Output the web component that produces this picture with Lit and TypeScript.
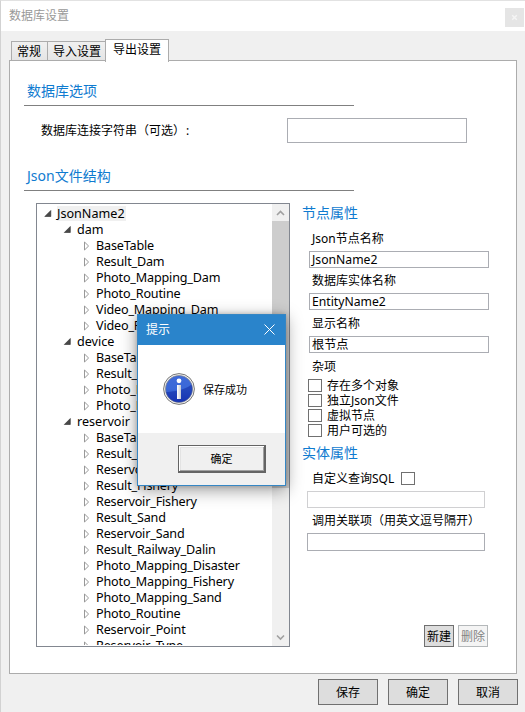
import { LitElement, html, css } from "lit";
import { customElement, property } from "lit/decorators.js";

interface TreeRow {
  text: string;
  level: number;
}

const kids = (names: string[]): TreeRow[] => names.map((text) => ({ text, level: 2 }));

const ROWS: TreeRow[] = [
  { text: "JsonName2", level: 0 },
  { text: "dam", level: 1 },
  ...kids(["BaseTable", "Result_Dam", "Photo_Mapping_Dam", "Photo_Routine", "Video_Mapping_Dam", "Video_Routine"]),
  { text: "device", level: 1 },
  ...kids(["BaseTable", "Result_Device", "Photo_Mapping_Device", "Photo_Routine"]),
  { text: "reservoir", level: 1 },
  ...kids([
    "BaseTable",
    "Result_Reservoir",
    "Reservoir_Dam",
    "Result_Fishery",
    "Reservoir_Fishery",
    "Result_Sand",
    "Reservoir_Sand",
    "Result_Railway_Dalin",
    "Photo_Mapping_Disaster",
    "Photo_Mapping_Fishery",
    "Photo_Mapping_Sand",
    "Photo_Routine",
    "Reservoir_Point",
    "Reservoir_Type",
  ]),
];

@customElement("config-tree")
export class ConfigTree extends LitElement {
  static styles = css`
    :host {
      display: flex;
      box-sizing: border-box;
      width: 254px;
      height: 444px;
      border: 1px solid #828790;
      background: #fff;
      overflow: hidden;
    }
    .rows {
      flex: 1;
      min-width: 0;
      height: 441px;
      padding-top: 2px;
      box-sizing: border-box;
      overflow: hidden;
    }
    .row {
      display: flex;
      height: 16px;
      line-height: 16px;
      font-size: 12.6px;
      white-space: pre;
    }
    .l0 { padding-left: 7px; }
    .l1 { padding-left: 26px; }
    .l2 { padding-left: 47px; letter-spacing: -0.17px; }
    .mark { flex: none; width: 13px; height: 16px; }
    .l2 .mark { width: 12px; }
    .l1 .mark { width: 14px; }
    .l0 .text { background: #f0f0f0; height: 15px; line-height: 15px; padding-right: 1px; }
    .bar {
      flex: none;
      width: 17px;
      display: flex;
      flex-direction: column;
      background: #f0f0f0;
    }
    .arrow { width: 17px; height: 17px; }
    .thumb { height: 267px; background: #cdcdcd; }
    .gap { flex: 1; }
  `;

  private mark(level: number) {
    return level < 2
      ? html`<svg class="mark" viewBox="0 0 13 16"><path d="M6.800 4.500V10.500H.8z" fill="#484848" stroke="#2e2e2e" stroke-width=".6" /></svg>`
      : html`<svg class="mark" viewBox="0 0 12 16"><path d="M.5 4v8L4.600 8z" fill="#fff" stroke="#989898" /></svg>`;
  }

  render() {
    return html`
      <div class="rows">
        ${ROWS.map((r) => html`<div class="row l${r.level}">${this.mark(r.level)}<span class="text">${r.text}</span></div>`)}
      </div>
      <div class="bar">
        <svg class="arrow" viewBox="0 0 17 17"><path d="M5 11l3.500-3.500L12 11" fill="none" stroke="#a0a0a0" stroke-width="1.600" /></svg>
        <div class="thumb"></div>
        <div class="gap"></div>
        <svg class="arrow" viewBox="0 0 17 17"><path d="M5 6.500 8.500 10 12 6.500" fill="none" stroke="#a0a0a0" stroke-width="1.600" /></svg>
      </div>
    `;
  }
}

@customElement("message-box")
export class MessageBox extends LitElement {
  @property() heading = "";
  @property() message = "";

  static styles = css`
    :host {
      display: flex;
      flex-direction: column;
      box-sizing: border-box;
      width: 149px;
      height: 172px;
      border: 1px solid #3586c4;
      background: #fff;
      box-shadow: 0 4px 16px rgba(0, 0, 0, 0.4), 0 0 5px rgba(0, 0, 0, 0.2);
      font-size: 11px;
    }
    .title {
      display: flex;
      justify-content: space-between;
      height: 30px;
      line-height: 30px;
      padding: 0 10px 0 8px;
      background: #2a84cb;
      color: #fff;
      font-size: 12px;
    }
    .close { width: 11px; height: 11px; margin-top: 9px; }
    .body {
      display: flex;
      align-items: center;
      flex: 1;
      padding-left: 25px;
      gap: 8px;
    }
    .icon { width: 32px; height: 32px; }
    .footer {
      display: flex;
      height: 52px;
      padding: 12px 19px 0 40px;
      box-sizing: border-box;
      background: #f0f0f0;
    }
    .ok {
      flex: 1;
      height: 28px;
      box-sizing: border-box;
      border: 1px solid #646464;
      border-right-width: 2px;
      border-bottom-width: 2px;
      box-shadow: inset 1px 1px #fff, inset -1px -1px #a0a0a0, inset 2px 2px #e3e3e3;
      text-align: center;
      line-height: 25px;
    }
  `;

  render() {
    return html`
      <div class="title">
        <span>${this.heading}</span>
        <svg class="close" viewBox="0 0 11 11"><path d="M.5.5l10 10M10.500.5l-10 10" stroke="#fff" stroke-width="1" /></svg>
      </div>
      <div class="body">
        <svg class="icon" viewBox="0 0 32 32">
          <defs>
            <linearGradient id="blue" x1="0" y1="0" x2="0" y2="1">
              <stop offset="0" stop-color="#3f6ad8" />
              <stop offset=".5" stop-color="#3a68d8" />
              <stop offset="1" stop-color="#1a38c0" />
            </linearGradient>
            <linearGradient id="stem" x1="0" y1="0" x2="1" y2="0">
              <stop offset="0" stop-color="#fff" />
              <stop offset="1" stop-color="#c4c8d4" />
            </linearGradient>
          </defs>
          <circle cx="16" cy="16" r="15.400" fill="#f4f4f4" stroke="#777" />
          <circle cx="16" cy="16" r="13.600" fill="url(#blue)" stroke="#8a8a8a" stroke-width=".7" />
          <path d="M3 19C10 19 22 17 28.500 11.500A13.200 13.200 0 0 1 16 29.200 13.200 13.200 0 0 1 3 19z" fill="#1430a8" opacity=".6" />
          <circle cx="16" cy="7.800" r="2.400" fill="#fff" />
          <path d="M14 12h4v14h-4z" fill="url(#stem)" />
        </svg>
        <span>${this.message}</span>
      </div>
      <div class="footer"><div class="ok">确定</div></div>
    `;
  }
}

@customElement("app-root")
export class AppRoot extends LitElement {
  static styles = css`
    :host {
      display: flex;
      flex-direction: column;
      position: relative;
      box-sizing: border-box;
      width: 525px;
      height: 712px;
      border-top: 1px solid #e2e2e2;
      border-left: 1px solid #d2d2d2;
      background: #f0f0f0;
      color: #000;
      font-family: "Noto Sans", "Noto Sans CJK SC", sans-serif;
      font-size: 12px;
      overflow: hidden;
      white-space: nowrap;
    }
    .edge {
      position: absolute;
      left: 202px;
      top: -1px;
      width: 34px;
      height: 1px;
      background: #484848;
    }
    .titlebar {
      display: flex;
      justify-content: space-between;
      height: 30px;
      line-height: 30px;
      padding: 0 1px 0 8px;
      background: #fff;
      color: #999;
    }
    .close {
      width: 19px;
      height: 19px;
      margin-top: 7px;
      background: #e5e5e5;
    }
    .tabs {
      display: flex;
      align-items: flex-end;
      height: 30px;
      padding-left: 10px;
      box-sizing: border-box;
      position: relative;
    }
    .tab {
      box-sizing: border-box;
      height: 19px;
      line-height: 19px;
      border: 1px solid #acacac;
      border-bottom: 0;
      background: linear-gradient(#f0f0f0, #e5e5e5);
      padding-left: 5px;
      margin-bottom: 1px;
    }
    .t1 { width: 37px; }
    .t2 { width: 59px; margin-left: -1px; }
    .t3 {
      width: 64px;
      height: 23px;
      line-height: 20px;
      padding-left: 7px;
      margin: 0 0 -1px -1px;
      background: #fff;
    }
    .panel {
      flex: none;
      box-sizing: border-box;
      width: 508px;
      height: 614px;
      margin: -1px 0 0 8px;
      padding: 0 27px 0 14px;
      border: 1px solid #acacac;
      background: #fff;
    }
    .head {
      color: #0f7bd0;
      font-size: 14px;
      line-height: 20px;
    }
    .ruled {
      box-sizing: border-box;
      width: 330px;
      height: 45px;
      padding: 20px 0 0 3px;
      border-bottom: 1px solid #808080;
    }
    .second { height: 47px; padding-top: 22px; }
    .conn {
      display: flex;
      justify-content: space-between;
      height: 38px;
      padding: 12px 22px 0 17px;
      line-height: 25px;
      box-sizing: border-box;
    }
    .colon { padding-left: 1px; }
    .field {
      box-sizing: border-box;
      width: 180px;
      height: 17px;
      line-height: 16px;
      padding-left: 2px;
      border: 1px solid #abadb3;
      background: #fff;
      font-size: 12.200px;
    }
    .conn .field { height: 25px; }
    .columns {
      display: flex;
      padding: 12px 0 0 12px;
      gap: 12px;
    }
    .props { width: 186px; height: 444px; display: flex; flex-direction: column; }
    .label { height: 25px; line-height: 26px; padding-left: 10px; }
    .first { height: 28px; line-height: 32px; }
    .lower { height: 26px; line-height: 28px; }
    .inline { display: flex; gap: 7px; height: 28px; line-height: 32px; }
    .inline .box { margin-top: 9px; }
    .props .field { flex: none; margin-left: 7px; }
    .check { display: flex; height: 15px; line-height: 14px; padding-left: 6px; gap: 5px; }
    .box {
      flex: none;
      box-sizing: border-box;
      width: 14px;
      height: 13px;
      border: 1px solid #707070;
      background: #fff;
    }
    .entity { margin-top: 4px; }
    .props .wide { width: 178px; margin-left: 5px; }
    .tall { height: 18px; }
    .dim { border-color: #d0d0d2; }
    .actions { display: flex; justify-content: flex-end; gap: 4px; margin-top: auto; }
    .btn {
      box-sizing: border-box;
      width: 60px;
      height: 26px;
      line-height: 25px;
      border: 1px solid #707070;
      background: #ddd;
      text-align: center;
    }
    .small { width: 30px; height: 22px; line-height: 21px; }
    .off { border-color: #b4b8ba; background: #f4f4f4; color: #838383; }
    .bottom { display: flex; justify-content: flex-end; gap: 10px; padding: 5px 7px 0 0; }
    .dialog { position: absolute; left: 136px; top: 313px; }
  `;

  render() {
    return html`
      <div class="edge"></div>
      <div class="titlebar">
        <span>数据库设置</span>
        <svg class="close" viewBox="0 0 19 19"><path d="M7.200 7.200l4.600 4.600M11.800 7.200l-4.600 4.600" stroke="#f5f5f5" stroke-width="1.500" /></svg>
      </div>
      <div class="tabs">
        <div class="tab t1">常规</div>
        <div class="tab t2">导入设置</div>
        <div class="tab t3">导出设置</div>
      </div>
      <div class="panel">
        <div class="head ruled">数据库选项</div>
        <div class="conn"><span>数据库连接字符串（可选）<span class="colon">:</span></span><div class="field"></div></div>
        <div class="head ruled second">Json文件结构</div>
        <div class="columns">
          <config-tree></config-tree>
          <div class="props">
            <div class="head">节点属性</div>
            <div class="label first">Json节点名称</div>
            <div class="field">JsonName2</div>
            <div class="label">数据库实体名称</div>
            <div class="field">EntityName2</div>
            <div class="label lower">显示名称</div>
            <div class="field">根节点</div>
            <div class="label lower">杂项</div>
            ${["存在多个对象", "独立Json文件", "虚拟节点", "用户可选的"].map(
              (t) => html`<div class="check"><div class="box"></div><span>${t}</span></div>`
            )}
            <div class="head entity">实体属性</div>
            <div class="label inline"><span>自定义查询SQL</span><div class="box"></div></div>
            <div class="field wide dim"></div>
            <div class="label">调用关联项（用英文逗号隔开）</div>
            <div class="field wide tall"></div>
            <div class="actions"><div class="btn small">新建</div><div class="btn small off">删除</div></div>
          </div>
        </div>
      </div>
      <div class="bottom"><div class="btn">保存</div><div class="btn">确定</div><div class="btn">取消</div></div>
      <message-box class="dialog" heading="提示" message="保存成功"></message-box>
    `;
  }
}
